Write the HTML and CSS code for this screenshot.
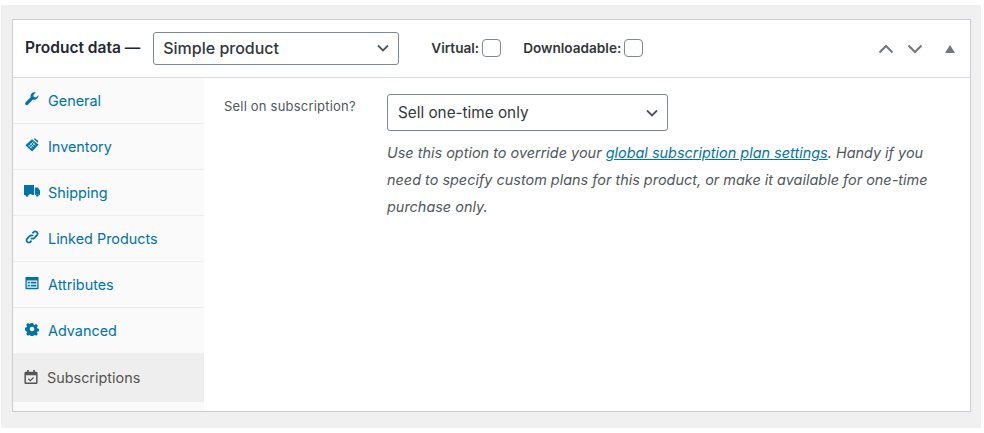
FILE: index.html
```html
<!DOCTYPE html>
<html lang="en">
<head>
<meta charset="utf-8">
<title>Product data</title>
<link rel="stylesheet" href="styles.css">
</head>
<body>
<div class="page">
  <section class="panel">
    <header class="head">
      <strong class="title">Product data —</strong>
      <div class="select select-type"><span>Simple product</span>
        <svg class="caret" viewBox="0 0 12 8"><path d="M1 1.500 6 6.500 11 1.500"/></svg></div>
      <label class="check first">Virtual: <span class="box"></span></label>
      <label class="check">Downloadable: <span class="box"></span></label>
      <div class="handles">
        <svg class="arrow" viewBox="0 0 16 10"><path d="M1.500 8.500 8 2l6.500 6.500"/></svg>
        <svg class="arrow" viewBox="0 0 16 10"><path d="M1.500 1.500 8 8l6.500-6.500"/></svg>
        <svg class="tri" viewBox="0 0 10 8"><path d="M5 0 10 8H0z"/></svg>
      </div>
    </header>
    <div class="body">
      <nav class="tabs">
        <a class="tab"><svg class="ico" viewBox="0 0 16 16"><path d="M15.200 3.700 12.500 6.300 10 5.800 9.500 3.300 12.200.7C10.500 0 8.700.4 7.500 1.600 6.300 2.800 6 4.500 6.500 6L.8 11.700c-.9.900-.9 2.100-.1 2.800.8.800 2 .7 2.800-.1L9.200 8.700c1.500.5 3.200.2 4.400-1 1.200-1.200 2-2.400 1.600-4z"/></svg>General</a>
        <a class="tab"><svg class="ico" viewBox="0 0 16 16"><path d="M8 1.500 15.500 7.800 8 15.500.5 8.200z"/><path d="M10 1.200 11.300.2 15.300 3.500 14.600 5.500z"/><path class="grid" d="M4 8l4 4M6 6.200l4 4M8 4.500l4 4M6 11.500l5-5.500M4.500 9.500l5-5.500"/></svg>Inventory</a>
        <a class="tab"><svg class="ico wide" viewBox="0 0 16 13"><path d="M0 1h10v10H8.200a1.900 1.900 0 0 0-3.400 0H0z"/><path d="M10.800 3.500h3L16 6.500V11h-1a1.900 1.900 0 0 0-3.400 0h-.8z"/><circle cx="3" cy="11.400" r="1.300"/><circle cx="13.300" cy="11.400" r="1.300"/></svg>Shipping</a>
        <a class="tab"><svg class="ico line" viewBox="0 0 16 16"><path d="M6.800 9.200a2.600 2.600 0 0 0 3.700 0l3-3a2.600 2.600 0 0 0-3.700-3.700L8.500 3.800"/><path d="M9.200 6.800a2.600 2.600 0 0 0-3.700 0l-3 3a2.600 2.600 0 0 0 3.700 3.700l1.300-1.300"/></svg>Linked Products</a>
        <a class="tab"><svg class="ico" viewBox="0 0 16 16"><path fill-rule="evenodd" d="M1.500 1h13A1 1 0 0 1 15.500 2v12a1 1 0 0 1-1 1h-13a1 1 0 0 1-1-1V2a1 1 0 0 1 1-1zM2 5v8.500h12V5zM3 6.500h2.500v2H3zM6.500 6.500H13v2H6.500zM3 10h2.500v2H3zM6.500 10H13v2H6.500z"/></svg>Attributes</a>
        <a class="tab"><svg class="ico" viewBox="0 0 16 16"><path fill-rule="evenodd" d="M6.600 1h2.800l.4 1.900 1.200.5 1.700-1 2 2-1 1.700.5 1.200 1.800.4v2.800l-1.800.4-.5 1.200 1 1.700-2 2-1.700-1-1.200.5-.4 1.700H6.600l-.4-1.700-1.200-.5-1.700 1-2-2 1-1.700-.5-1.200L0 9.300V6.500l1.800-.4.500-1.200-1-1.700 2-2 1.700 1 1.200-.5zM8 5.400a2.600 2.600 0 1 0 0 5.200 2.600 2.600 0 0 0 0-5.200z"/></svg>Advanced</a>
        <a class="tab active"><svg class="ico cal" viewBox="0 0 16 16"><path fill-rule="evenodd" d="M3.500 0h2v2h5V0h2v2H14a1.500 1.500 0 0 1 1.500 1.500v11A1.500 1.500 0 0 1 14 16H2A1.500 1.500 0 0 1 .5 14.500v-11A1.500 1.500 0 0 1 2 2h1.500zM2.200 6v8.300h11.600V6z"/><path class="tick" d="M5 10l2.200 2.200L11 8.600"/></svg>Subscriptions</a>
      </nav>
      <div class="content">
        <span class="label">Sell on subscription?</span>
        <div class="field">
          <div class="select select-sub"><span>Sell one-time only</span>
            <svg class="caret" viewBox="0 0 12 8"><path d="M1 1.500 6 6.500 11 1.500"/></svg></div>
          <p class="note">Use this option to override your <a class="link">global subscription plan settings</a>. Handy if you need to specify custom plans for this product, or make it available for <span class="keep">one-time</span> purchase only.</p>
        </div>
      </div>
    </div>
  </section>
</div>
</body>
</html>
```
FILE: styles.css
```css
* { box-sizing: border-box; }
html, body { margin: 0; background: #fff; }
body { font-family: Inter, "Liberation Sans", sans-serif; color: #3c434a; }
.page {
  margin: 5px 3px 5px 1px;
  height: 423px;
  padding: 14px 10px 16px 11px;
  background: #f0f0f1;
}
.panel {
  height: 393px;
  display: flex;
  flex-direction: column;
  background: #fff;
  border: 1px solid #c9ced4;
}
.head {
  height: 58px;
  flex: none;
  display: flex;
  align-items: center;
  padding: 0 15px 0 12px;
  border-bottom: 1px solid #d7dade;
}
.title { font-size: 15.500px; font-weight: 600; color: #23282d; margin: -2px 13px 0 0; white-space: nowrap; }
.select {
  display: flex;
  align-items: center;
  justify-content: space-between;
  background: #fff;
  border: 1px solid #7e8993;
  border-radius: 3px;
  padding: 0 9px;
  color: #32373c;
  white-space: nowrap;
}
.select-type { width: 246px; height: 33px; font-size: 16px; font-weight: 500; padding-bottom: 1px; }
.select-sub { width: 281px; height: 37px; font-size: 15.300px; padding-left: 10px; }
.caret { width: 12px; height: 8px; fill: none; stroke: #50575e; stroke-width: 1.800; }
.check { display: flex; align-items: center; gap: 3px; font-size: 13.600px; font-weight: 600; color: #32373c; margin: -2px 0 0 22px; white-space: nowrap; }
.first { margin-left: 32px; }
.box { width: 19px; height: 18px; border: 1px solid #7e8993; border-radius: 4px; background: #fff; }
.handles { margin-left: auto; display: flex; align-items: center; }
.arrow { width: 16px; height: 10px; fill: none; stroke: #72777c; stroke-width: 2; margin-right: 13px; }
.tri { width: 10px; height: 8px; fill: #72777c; margin-left: 9px; }
.body { flex: 1; display: flex; min-height: 0; }
.tabs {
  width: 191px;
  flex: none;
  display: flex;
  flex-direction: column;
  background: #fafafa;
}
.tab {
  height: 46px;
  flex: none;
  display: flex;
  align-items: center;
  padding: 0 0 0 11px;
  font-size: 14.400px;
  color: #0073aa;
  border-bottom: 1px solid #eeeeee;
  white-space: nowrap;
}
.ico { width: 14px; height: 14px; margin: -4px 9px 0 1px; fill: #0073aa; flex: none; }
.wide { width: 16px; height: 13px; margin-left: 0; margin-right: 8px; }
.line { fill: none; stroke: #0073aa; stroke-width: 2; }
.grid { fill: none; stroke: #fafafa; stroke-width: .8; }
.active { background: #eeeeee; color: #555; border-bottom: 0; height: 48px; padding-bottom: 2px; }
.cal { fill: #555; margin: 0 9px 0 0; }
.tick { fill: none; stroke: #555; stroke-width: 1.400; }
.content { flex: 1; display: flex; padding: 16px 20px 0 20px; }
.label { width: 163px; flex: none; font-size: 13px; padding-top: 4px; color: #50575e; letter-spacing: .2px; white-space: nowrap; }
.field { width: 544px; }
.note { margin: 8px 0 0; font-size: 14.450px; font-style: italic; line-height: 27px; color: #50575e; }
.keep { white-space: nowrap; }
.link { color: #0073aa; text-decoration: underline; }
```
